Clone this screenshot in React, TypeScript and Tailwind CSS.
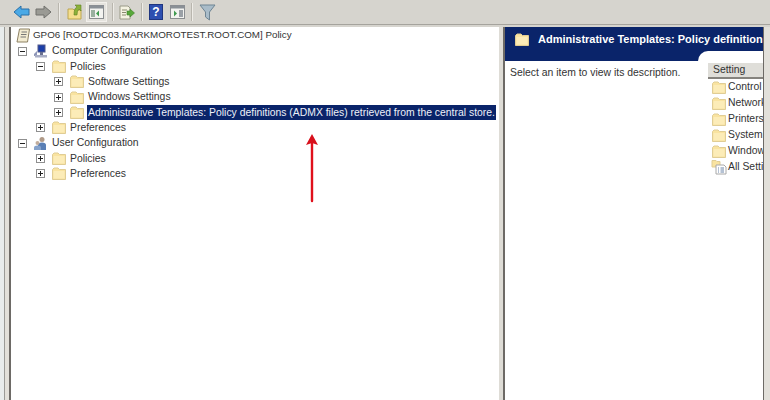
const font = "[font-family:'Liberation_Sans','DejaVu_Sans',sans-serif]";

function Folder({ className = "" }: { className?: string }) {
  return (
    <svg viewBox="0 0 14 13" className={"w-[14px] h-[13px] shrink-0 " + className}>
      <path d="M0.5 2.5 L2 1 H6 L7.5 2.5 H13.5 V12.5 H0.5 Z" fill="#f9e3a0" stroke="#e0cd95" />
      <rect x="1.5" y="4" width="11" height="7.5" fill="#fcecb8" />
    </svg>
  );
}

function Expander({ open }: { open: boolean }) {
  return (
    <svg viewBox="0 0 9 9" className="w-[9px] h-[9px] shrink-0">
      <rect x="0.5" y="0.5" width="8" height="8" fill="#fff" stroke="#8f8f8f" />
      <path d={open ? "M2 4.5 H7" : "M2 4.5 H7 M4.5 2 V7"} stroke="#222" />
    </svg>
  );
}

function ComputerIcon() {
  return (
    <svg viewBox="0 0 15 14" className="w-[15px] h-[14px] shrink-0">
      <rect x="5" y="1" width="7" height="7" fill="#1c3fa8" stroke="#51588a" />
      <path d="M1 10 L4 7 V12 H1 Z" fill="#8e96b8" />
      <rect x="2" y="11" width="12" height="2.5" fill="#a8adc4" />
      <rect x="7" y="8" width="3" height="3" fill="#6a7090" />
    </svg>
  );
}

function UserIcon() {
  return (
    <svg viewBox="0 0 15 15" className="w-[15px] h-[15px] shrink-0">
      <circle cx="9" cy="3.5" r="2.5" fill="#b09a88" />
      <path d="M5 14 V9 Q5 6.5 9 6.5 Q13 6.5 13 9 V14 Z" fill="#5a7fb5" />
      <circle cx="4.5" cy="7" r="2" fill="#c2ad9c" />
      <path d="M1 14 V11.5 Q1 9.5 4.5 9.5 Q8 9.5 8 11.5 V14 Z" fill="#86a3cc" />
    </svg>
  );
}

function ScrollIcon() {
  return (
    <svg viewBox="0 0 15 15" className="w-[15px] h-[15px] shrink-0">
      <path d="M3.5 1 H13.5 L11.5 14 H1 Z" fill="#f3ecd2" stroke="#8d8163" />
      <path d="M5.5 4 H11 M5 6.5 H10.5 M4.5 9 H10" stroke="#777" />
    </svg>
  );
}

function NoteIcon() {
  return (
    <svg viewBox="0 0 16 16" className="w-[16px] h-[16px] shrink-0">
      <path d="M1 1.5 H5 L6 2.5 H9 V8 H1 Z" fill="#f9e3a0" stroke="#e0cd95" />
      <path d="M5 6 H13 L15 8 V15 H5 Z" fill="#fff" stroke="#a8a8a8" />
      <path d="M7 9 H8 M9.5 9 H13 M7 11 H8 M9.5 11 H13 M7 13 H8 M9.5 13 H13" stroke="#6b84a8" />
    </svg>
  );
}

function Row({ level, open, icon, label, selected }: {
  level: number;
  open?: boolean;
  icon: React.ReactNode;
  label: string;
  selected?: boolean;
}) {
  const indent = ["pl-[7px]", "pl-[25px]", "pl-[43px]"][level];
  return (
    <div className={"flex items-center h-[15.35px] " + indent}>
      <Expander open={!!open} />
      <div className="w-[6px] shrink-0" />
      <div className="w-[15px] shrink-0 flex justify-center">{icon}</div>
      <span className={selected
        ? "ml-[3px] px-px bg-[#0a246a] text-[#eef1f8] h-[15px] leading-[15px] whitespace-nowrap"
        : "ml-[4px] whitespace-nowrap text-[#333]"}>
        {label}
      </span>
    </div>
  );
}

function Sep() {
  return <div className="w-[2px] h-[18px] bg-[#b9b6ae] border-r border-[#eeece7]" />;
}

function Toolbar() {
  return (
    <div className="h-[24px] bg-[#d6d4ce] flex items-center pl-[13px] shrink-0">
      <svg viewBox="0 0 17 14" className="w-[17px] h-[14px]">
        <path d="M1 7 L8 1 V4 H16 V10 H8 V13 Z" fill="#4aa9e6" stroke="#2a70a8" />
      </svg>
      <svg viewBox="0 0 17 14" className="w-[17px] h-[14px] ml-[5px]">
        <path d="M16 7 L9 1 V4 H1 V10 H9 V13 Z" fill="#9a9a94" stroke="#70706c" />
      </svg>
      <div className="ml-[6px]"><Sep /></div>
      <svg viewBox="0 0 15 16" className="w-[15px] h-[16px] ml-[7px]">
        <path d="M1 5 H6 L7 6 H14 V15 H1 Z" fill="#f5df8e" stroke="#bda650" />
        <path d="M7 11 Q7 4 10 3 L8 1 H14 V7 L12 5 Q10 7 10 11 Z" fill="#8bb13a" stroke="#5f8020" strokeWidth="0.6" />
      </svg>
      <div className="ml-[4px] w-[21px] h-[20px] bg-[#e5e3de] border border-[#f2f0ec] flex items-center justify-center">
        <svg viewBox="0 0 15 14" className="w-[15px] h-[14px]">
          <rect x="0.5" y="0.5" width="14" height="13" fill="#f3f3f0" stroke="#8a8d90" />
          <rect x="0.5" y="0.5" width="14" height="3" fill="#8a9096" />
          <rect x="2" y="5" width="4" height="7" fill="#9ab0a0" />
          <path d="M7 8.5 L10 5.5 V11.5 Z" fill="#3f9a4f" />
        </svg>
      </div>
      <div className="ml-[5px]"><Sep /></div>
      <svg viewBox="0 0 16 15" className="w-[16px] h-[15px] ml-[5px]">
        <path d="M1 1 H9 L11 3 V14 H1 Z" fill="#f5f3e2" stroke="#9a9a88" />
        <path d="M3 5 H8 M3 7.5 H7 M3 10 H7" stroke="#8a8a70" />
        <path d="M8 6 H11 V4 L15.5 8 L11 12 V10 H8 Z" fill="#58a83a" stroke="#3d7e28" strokeWidth="0.6" />
      </svg>
      <div className="ml-[6px]"><Sep /></div>
      <div className="ml-[6px] w-[14px] h-[16px] bg-[#2d4fb0] border border-[#1f3580] text-white font-bold text-[12px] leading-[14px] text-center">?</div>
      <svg viewBox="0 0 15 14" className="w-[15px] h-[14px] ml-[7px]">
        <rect x="0.5" y="0.5" width="14" height="13" fill="#f3f3f0" stroke="#8a8d90" />
        <rect x="0.5" y="0.5" width="14" height="3" fill="#8a9096" />
        <path d="M4 5.5 L7 8.5 L4 11.5 Z" fill="#3f9a4f" />
        <rect x="9" y="5" width="4" height="7" fill="#9aa0a6" />
      </svg>
      <div className="ml-[6px]"><Sep /></div>
      <svg viewBox="0 0 17 17" className="w-[17px] h-[17px] ml-[6px]">
        <path d="M1 1 H16 L10.5 8 V16 L6.5 13 V8 Z" fill="#a9bcc9" stroke="#6f8594" />
      </svg>
    </div>
  );
}

function LeftPane() {
  return (
    <div className="w-[488px] shrink-0 bg-white relative pt-[1px] overflow-hidden">
      <div className="flex items-center h-[15.35px] pl-[5px] text-[#333]">
        <ScrollIcon />
        <span className="ml-[2px] whitespace-nowrap text-[9.8px]">GPO6 [ROOTDC03.MARKMOROTEST.ROOT.COM] Policy</span>
      </div>
      <Row level={0} open icon={<ComputerIcon />} label="Computer Configuration" />
      <Row level={1} open icon={<Folder />} label="Policies" />
      <Row level={2} icon={<Folder />} label="Software Settings" />
      <Row level={2} icon={<Folder />} label="Windows Settings" />
      <Row level={2} selected icon={<Folder />} label="Administrative Templates: Policy definitions (ADMX files) retrieved from the central store." />
      <Row level={1} icon={<Folder />} label="Preferences" />
      <Row level={0} open icon={<UserIcon />} label="User Configuration" />
      <Row level={1} icon={<Folder />} label="Policies" />
      <Row level={1} icon={<Folder />} label="Preferences" />
      {/* red annotation arrow */}
      <svg viewBox="0 0 14 70" className="absolute left-[294px] top-[106px] w-[14px] h-[70px]">
        <path d="M7 68 V6" stroke="#e0101c" strokeWidth="2.4" strokeLinecap="round" />
        <path d="M7 1 L13 12 L7 10 L1 12 Z" fill="#d8101c" />
      </svg>
    </div>
  );
}

function RightPane() {
  const items = ["Control Panel", "Network", "Printers", "System", "Windows Components"];
  return (
    <div className="flex-1 bg-white flex flex-col overflow-hidden">
      <div className="h-[24px] bg-[#0a246a] flex items-center pl-[10px] shrink-0 pt-[1px]">
        <Folder />
        <span className="ml-[9px] text-white font-bold text-[11px] whitespace-nowrap">
          Administrative Templates: Policy definitions (ADMX files) retrieved
        </span>
      </div>
      <div className="flex flex-1">
        <div className="w-[203px] shrink-0 relative">
          <div className="h-[10px] bg-[#0a246a]">
            <div className="absolute right-0 top-0 w-[10px] h-[10px] bg-white rounded-tl-[10px]" />
          </div>
          <div className="pl-[5px] mt-[4px] text-[#333] whitespace-nowrap">Select an item to view its description.</div>
        </div>
        <div className="flex-1 overflow-hidden">
          <div className="mt-[12px] h-[16px] bg-[#dfded9] border-b-2 border-[#85837e] pl-[5px] leading-[14px] text-[#333]">Setting</div>
          {items.map((item) => (
            <div key={item} className="flex items-center h-[16px] pl-[4px] whitespace-nowrap text-[#333]">
              <Folder />
              <span className="ml-[2px]">{item}</span>
            </div>
          ))}
          <div className="flex items-center h-[16px] pl-[3px] whitespace-nowrap text-[#333]">
            <NoteIcon />
            <span className="ml-[1px]">All Settings</span>
          </div>
        </div>
      </div>
    </div>
  );
}

export default function App() {
  return (
    <div className={"w-[770px] h-[400px] overflow-hidden flex flex-col bg-[#d6d4ce] text-[10.4px] " + font}>
      <Toolbar />
      <div className="h-[3px] bg-[#d6d4ce] border-t border-[#a5a39d] shrink-0" />
      <div className="flex flex-1 min-h-0">
        <div className="w-[11px] shrink-0 flex">
          <div className="w-[4px] bg-[#e8ecec]" />
          <div className="w-[1px] bg-[#9a9a96]" />
          <div className="w-[4px] bg-[#e2e0da]" />
          <div className="w-[2px] bg-[#6d6a66]" />
        </div>
        <LeftPane />
        <div className="w-[6px] shrink-0 flex">
          <div className="w-[4px] bg-[#dedcd6]" />
          <div className="w-[2px] bg-[#6d6a66]" />
        </div>
        <RightPane />
        <div className="w-[7px] shrink-0 flex">
          <div className="w-[1px] bg-[#6d6a66]" />
          <div className="flex-1 bg-[#e2e0da]" />
        </div>
      </div>
    </div>
  );
}
